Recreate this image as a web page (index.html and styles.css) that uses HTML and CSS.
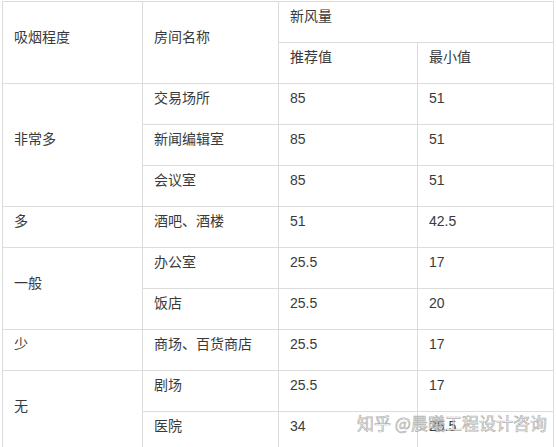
FILE: index.html
```html
<!DOCTYPE html>
<html lang="zh">
<head>
<meta charset="utf-8">
<link rel="stylesheet" href="styles.css">
</head>
<body>
<div class="wrap">
<table class="grid">
  <colgroup>
    <col class="c1"><col class="c2"><col class="c3"><col class="c4">
  </colgroup>
  <tr>
    <td rowspan="2">吸烟程度</td>
    <td rowspan="2">房间名称</td>
    <td colspan="2">新风量</td>
  </tr>
  <tr>
    <td>推荐值</td>
    <td>最小值</td>
  </tr>
  <tr>
    <td rowspan="3">非常多</td>
    <td>交易场所</td>
    <td>85</td>
    <td>51</td>
  </tr>
  <tr>
    <td>新闻编辑室</td>
    <td>85</td>
    <td>51</td>
  </tr>
  <tr>
    <td>会议室</td>
    <td>85</td>
    <td>51</td>
  </tr>
  <tr>
    <td>多</td>
    <td>酒吧、酒楼</td>
    <td>51</td>
    <td>42.5</td>
  </tr>
  <tr>
    <td rowspan="2">一般</td>
    <td>办公室</td>
    <td>25.5</td>
    <td>17</td>
  </tr>
  <tr>
    <td>饭店</td>
    <td>25.5</td>
    <td>20</td>
  </tr>
  <tr>
    <td>少</td>
    <td>商场、百货商店</td>
    <td>25.5</td>
    <td>17</td>
  </tr>
  <tr>
    <td rowspan="2">无</td>
    <td>剧场</td>
    <td>25.5</td>
    <td>17</td>
  </tr>
  <tr>
    <td>医院</td>
    <td>34</td>
    <td>25.5</td>
  </tr>
</table>
<div class="watermark">知乎 @晨曦工程设计咨询</div>
</div>
</body>
</html>
```

FILE: styles.css
```css
html, body {
  margin: 0;
  padding: 0;
  background: #fff;
  overflow: hidden;
}
.wrap {
  position: relative;
  padding: 1px 0 0 2px;
}
.grid {
  border-collapse: collapse;
  table-layout: fixed;
  width: 551px;
  font-family: "Liberation Sans", "Noto Sans CJK SC", sans-serif;
  font-size: 14px;
  color: #3a3a3a;
}
.c1 { width: 140px; }
.c2 { width: 136px; }
.c3 { width: 139px; }
.c4 { width: 136px; }
.grid td {
  border: 1px solid #dcdcdc;
  padding: 3px 11px 15px 11px;
  line-height: 22px;
  vertical-align: middle;
  text-align: left;
  white-space: nowrap;
}
.watermark {
  position: absolute;
  left: 357px;
  top: 412px;
  font-family: "Noto Sans CJK SC", sans-serif;
  font-size: 17px;
  line-height: 22px;
  color: rgba(250, 250, 250, 0.85);
  -webkit-text-stroke: 0.7px rgba(110, 110, 110, 0.55);
  letter-spacing: 0;
}
```
